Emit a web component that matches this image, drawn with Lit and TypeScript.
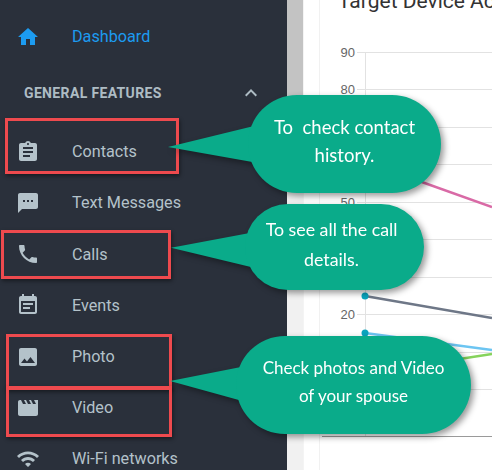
import { LitElement, html, css, svg } from "lit";
import { customElement } from "lit/decorators.js";

const ICONS: Record<string, string> = {
  home: "M10 20v-6h4v6h5v-8h3L12 3 2 12h3v8z",
  assignment: "M19 3h-4.18C14.4 1.84 13.3 1 12 1c-1.3 0-2.4.84-2.82 2H5c-1.1 0-2 .9-2 2v14c0 1.1.9 2 2 2h14c1.1 0 2-.9 2-2V5c0-1.1-.9-2-2-2zm-7 0c.55 0 1 .45 1 1s-.45 1-1 1-1-.45-1-1 .45-1 1-1zm2 14H7v-2h7v2zm3-4H7v-2h10v2zm0-4H7V7h10v2z",
  sms: "M20 2H4c-1.1 0-1.99.9-1.99 2L2 22l4-4h14c1.1 0 2-.9 2-2V4c0-1.1-.9-2-2-2zM9 11H7V9h2v2zm4 0h-2V9h2v2zm4 0h-2V9h2v2z",
  call: "M6.62 10.79c1.44 2.83 3.76 5.14 6.59 6.59l2.2-2.2c.27-.27.67-.36 1.02-.24 1.12.37 2.33.57 3.57.57.55 0 1 .45 1 1V20c0 .55-.45 1-1 1-9.39 0-17-7.61-17-17 0-.55.45-1 1-1h3.5c.55 0 1 .45 1 1 0 1.25.2 2.45.57 3.57.11.35.03.74-.25 1.02l-2.2 2.2z",
  event: "M17 10H7v2h10v-2zm2-7h-1V1h-2v2H8V1H6v2H5c-1.11 0-1.99.9-1.99 2L3 19c0 1.1.89 2 2 2h14c1.1 0 2-.9 2-2V5c0-1.1-.9-2-2-2zm0 16H5V8h14v11zm-5-5H7v2h7v-2z",
  photo: "M21 19V5c0-1.1-.9-2-2-2H5c-1.1 0-2 .9-2 2v14c0 1.1.9 2 2 2h14c1.1 0 2-.9 2-2zM8.5 13.5l2.5 3.01L14.5 12l4.5 6H5l3.5-4.5z",
  movie: "M18 4l2 4h-3l-2-4h-2l2 4h-3l-2-4H8l2 4H7L5 4H4c-1.1 0-1.99.9-1.99 2L2 18c0 1.1.9 2 2 2h16c1.1 0 2-.9 2-2V4h-4z",
  wifi: "M1 9l2 2c4.97-4.97 13.03-4.97 18 0l2-2C16.93 2.93 7.08 2.93 1 9zm8 8l3 3 3-3c-1.65-1.66-4.34-1.66-6 0zm-4-4l2 2c2.76-2.76 7.24-2.76 10 0l2-2C15.14 9.14 8.87 9.14 5 13z",
  chevron: "M7.41 15.41L12 10.83l4.59 4.58L18 14l-6-6-6 6z",
};

const icon = (name: string) =>
  html`<svg class="icon" viewBox="0 0 24 24" fill="currentColor"><path d=${ICONS[name]}></path></svg>`;

const NAV = [
  ["assignment", "Contacts"],
  ["sms", "Text Messages"],
  ["call", "Calls"],
  ["event", "Events"],
  ["photo", "Photo"],
  ["movie", "Video"],
  ["wifi", "Wi-Fi networks"],
];

const GRID: Array<[number, string]> = [
  [52, "90"], [89, "80"], [127, ""], [164, ""], [202, "50"], [239, ""], [277, ""], [314, "20"], [352, ""], [389, ""],
];

@customElement("app-root")
export class AppRoot extends LitElement {
  static styles = css`
    :host { display: block; width: 492px; height: 470px; overflow: hidden; position: relative; font-family: Roboto, "Liberation Sans", sans-serif; }
    .page { display: flex; width: 492px; height: 470px; background: #fff; }
    .side { width: 287px; flex: none; background: #2a303b; color: #b4c2ca; box-sizing: border-box; padding-top: 11px; }
    .row { display: flex; align-items: center; height: 51.2px; padding-left: 16px; font-size: 16.2px; }
    .icon { width: 24px; height: 24px; flex: none; margin-right: 32px; }
    .row.active { color: #1c9bf0; }
    .head { display: flex; align-items: center; height: 44px; margin: 9px 0 11px; padding: 0 24px 0 24px; font-size: 14px; font-weight: 700; letter-spacing: .35px; justify-content: space-between; color: #aebcc4; }
    .head .icon { margin: 0; }
    .strip { width: 16px; flex: none; display: flex; flex-direction: column; }
    .strip .dark { height: 190px; background: #c3c3c3; }
    .strip .light { flex: 1; background: #f1f1f1; }
    .panel { flex: 1; position: relative; overflow: hidden; border-left: 1px solid #f4f4f4; box-sizing: border-box; }
    .title { margin: 0; padding-left: 34px; font-size: 21px; font-weight: 400; line-height: 20px; margin-top: -9px; color: #333; white-space: nowrap; }
    .chart { position: absolute; left: -304px; top: 0; width: 492px; height: 470px; }
    .chart text { font: 13px "Liberation Sans", sans-serif; fill: #666; text-anchor: end; }
    .box { position: absolute; box-sizing: border-box; border: 3px solid #ee4a4e; box-shadow: 1px 2px 4px rgba(0,0,0,.45); }
    .b1 { left: 5px; top: 118px; width: 174px; height: 56px; }
    .b2 { left: 1px; top: 230px; width: 170px; height: 49px; }
    .b3 { left: 6px; top: 334px; width: 166px; height: 56px; }
    .b4 { left: 6px; top: 386px; width: 166px; height: 51px; }
    .call { position: absolute; filter: drop-shadow(3px 3px 3px rgba(0,0,0,.4)); }
    .pill { position: absolute; background: #0aab8a; color: #fff; display: flex; align-items: center; justify-content: center; text-align: center; box-sizing: border-box;
      font-family: Lato, sans-serif; font-weight: 400; font-size: 18.5px; line-height: 28px; white-space: pre; padding-bottom: 6px; }
    .tail { position: absolute; background: #0aab8a; }
    .c1 { left: 168px; top: 95px; width: 273px; height: 98px; }
    .c1 .pill { left: 80px; top: 0; width: 193px; height: 98px; border-radius: 49px; }
    .c1 .tail { left: 0; top: 30px; width: 90px; height: 38px; clip-path: polygon(0 58%, 100% 0, 100% 100%); }
    .c2 { left: 171px; top: 204px; width: 253px; height: 86px; }
    .c2 .pill { left: 74px; top: 0; width: 179px; height: 86px; border-radius: 43px; font-size: 17.8px; line-height: 30px; padding-right: 6px; }
    .c2 .tail { left: 0; top: 28px; width: 84px; height: 36px; clip-path: polygon(0 44%, 100% 0, 100% 100%); }
    .c3 { left: 170px; top: 336px; width: 301px; height: 98px; }
    .c3 .pill { left: 66px; top: 0; width: 235px; height: 98px; border-radius: 49px; font-size: 17px; }
    .c3 .tail { left: 0; top: 30px; width: 76px; height: 36px; clip-path: polygon(0 42%, 100% 0, 100% 100%); }
  `;

  render() {
    return html`
      <div class="page">
        <nav class="side">
          <div class="row active">${icon("home")}<span>Dashboard</span></div>
          <div class="head"><span>GENERAL FEATURES</span>${icon("chevron")}</div>
          ${NAV.map(([i, t]) => html`<div class="row">${icon(i)}<span>${t}</span></div>`)}
        </nav>
        <div class="strip"><div class="dark"></div><div class="light"></div></div>
        <main class="panel">
          <h2 class="title">Target Device Activity</h2>
          <svg class="chart" viewBox="0 0 492 470">
            <line x1="319.5" y1="0" x2="319.5" y2="470" stroke="#f1f1f1"></line>
            ${GRID.map(([y, l]) => svg`
              <line x1="357" y1=${y + 0.5} x2="492" y2=${y + 0.5} stroke="#e2e2e2"></line>
              ${l ? svg`<text x="355" y=${y + 4.5}>${l}</text>` : ""}
            `)}
            <line x1="365.5" y1="52" x2="365.5" y2="436" stroke="#e2e2e2"></line>
            <line x1="322" y1="436.5" x2="492" y2="436.5" stroke="#9a9a9a"></line>
            <path d="M405 176L492 207" stroke="#d96aa6" stroke-width="2.5" fill="none"></path>
            <path d="M365 296L492 318" stroke="#6e7787" stroke-width="2.5" fill="none"></path>
            <path d="M365 333L492 350" stroke="#6cc5f2" stroke-width="2.5" fill="none"></path>
            <path d="M440 362L492 354" stroke="#86d35c" stroke-width="2.5" fill="none"></path>
            <circle cx="365" cy="296" r="3.5" fill="#0aa5bd"></circle>
            <circle cx="365" cy="333" r="3.5" fill="#0aa5bd"></circle>
          </svg>
        </main>
      </div>
      <div class="box b1"></div>
      <div class="box b2"></div>
      <div class="box b3"></div>
      <div class="box b4"></div>
      <div class="call c1"><div class="tail"></div><div class="pill">To  check contact
history.</div></div>
      <div class="call c2"><div class="tail"></div><div class="pill">To see all the call
details.</div></div>
      <div class="call c3"><div class="tail"></div><div class="pill">Check photos and Video
of your spouse</div></div>
    `;
  }
}
